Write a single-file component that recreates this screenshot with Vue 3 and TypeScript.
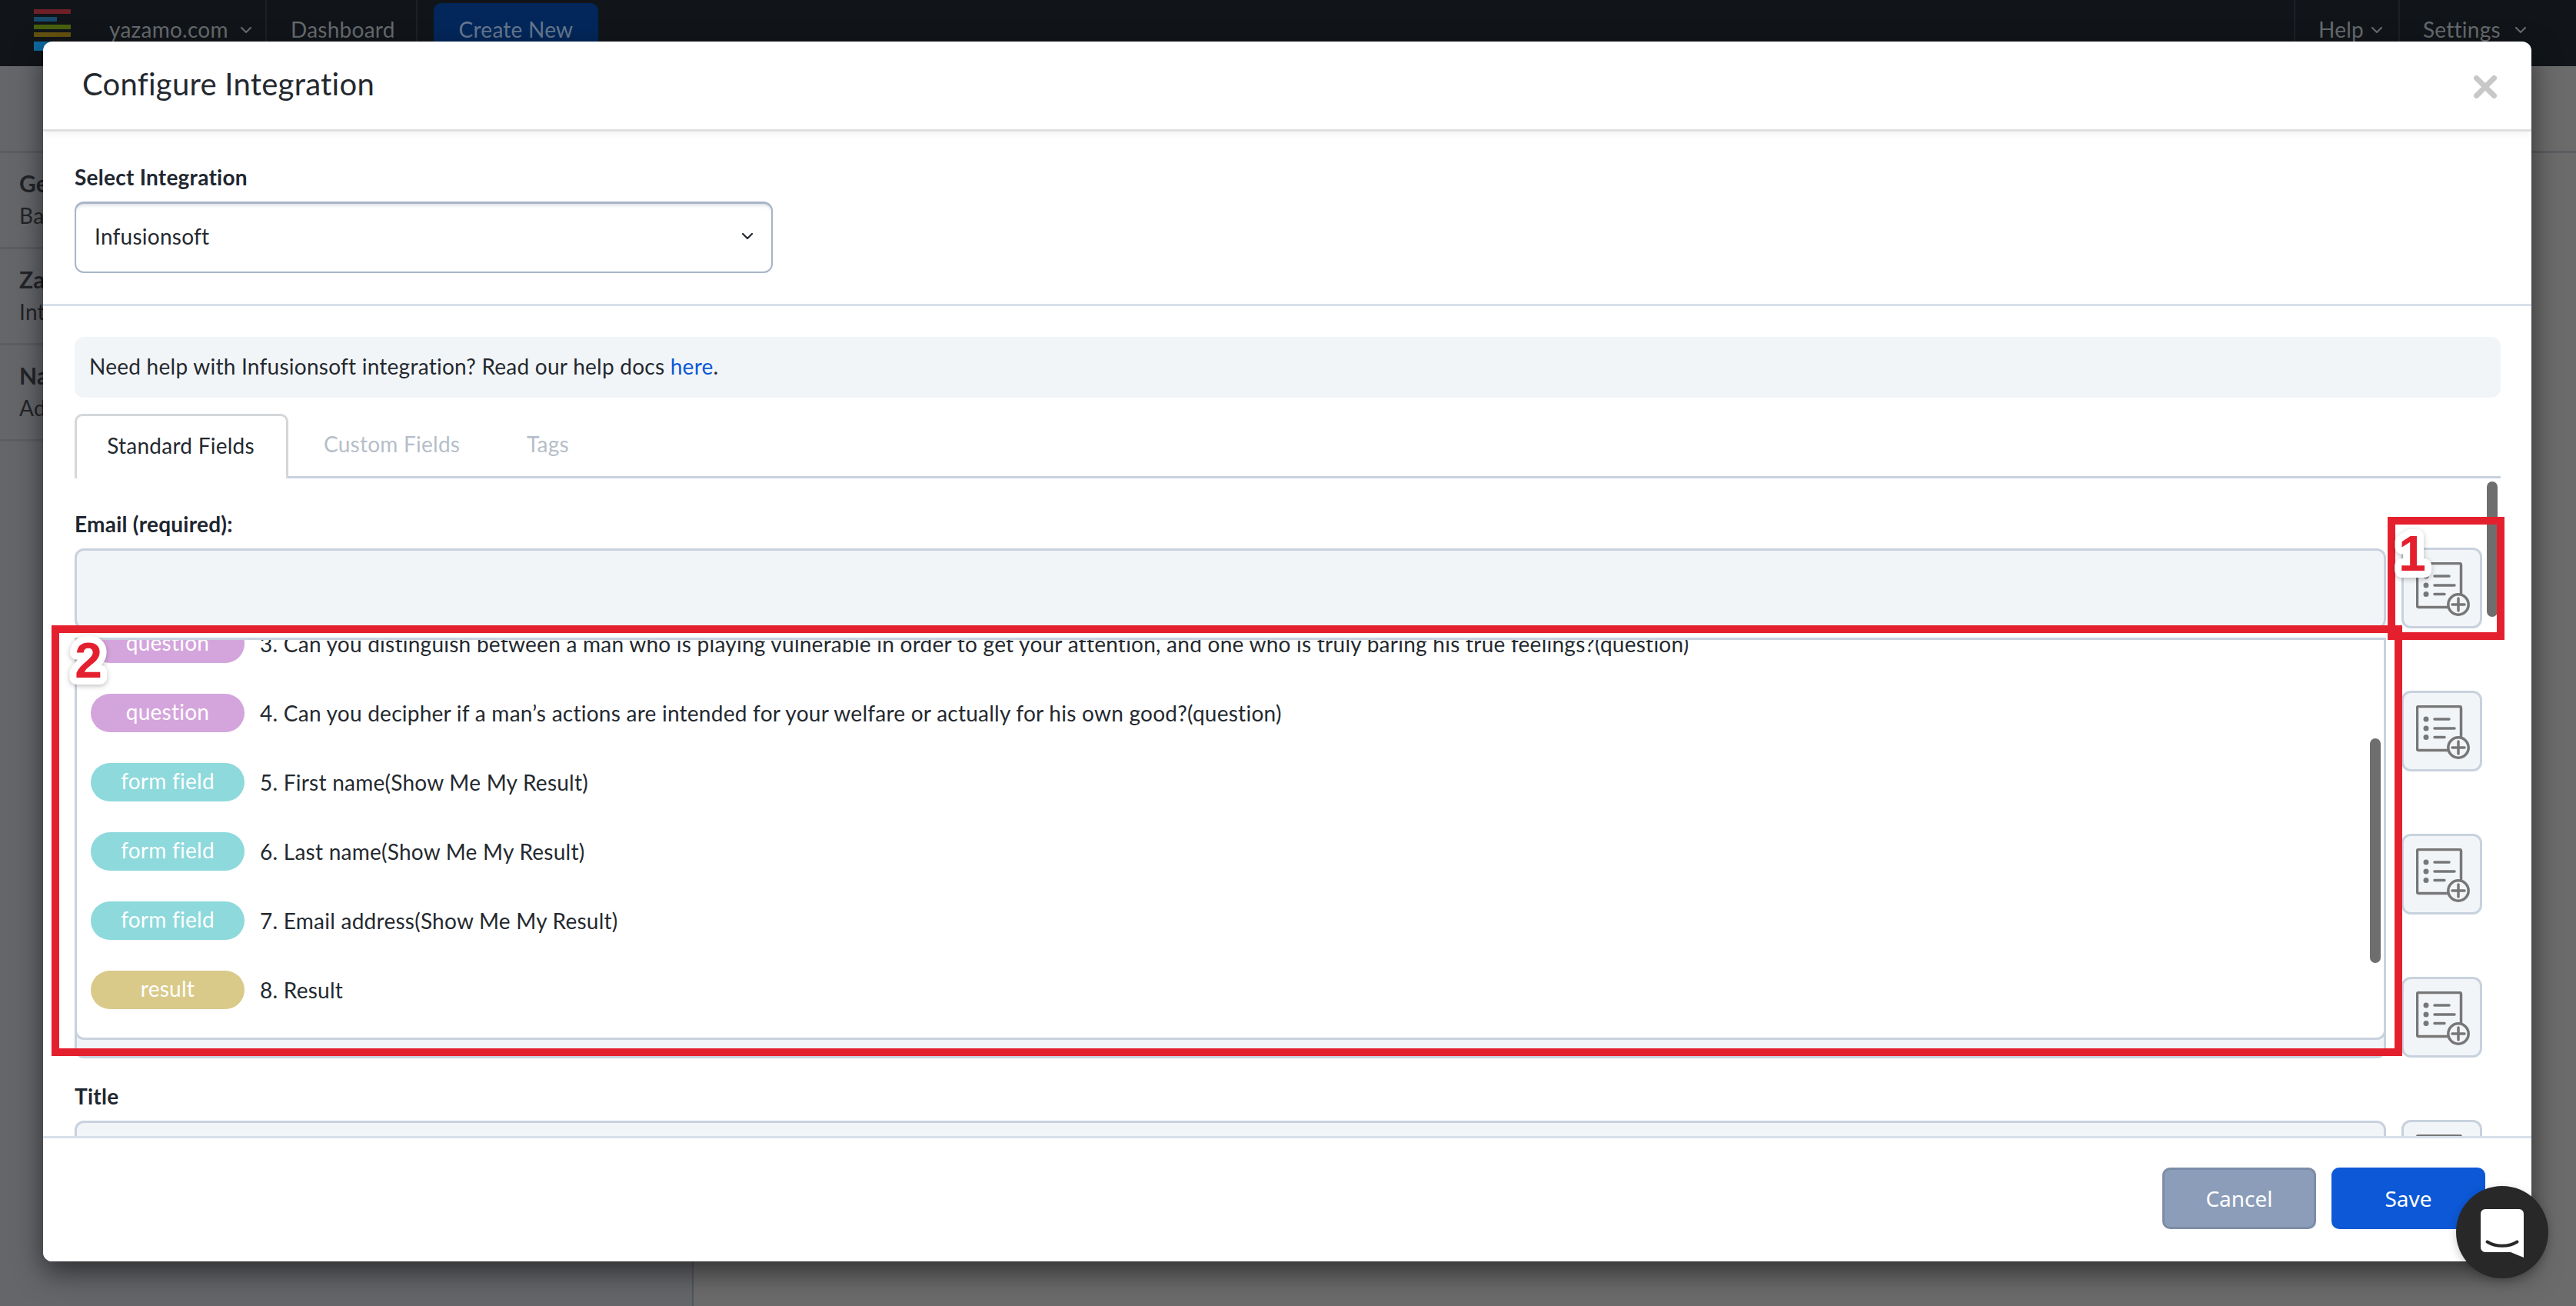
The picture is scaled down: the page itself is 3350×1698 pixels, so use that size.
<script setup lang="ts">
interface Row { pill: string; kind: string; text: string }
const rows: Row[] = [
  { pill: 'question', kind: 'q', text: '3. Can you distinguish between a man who is playing vulnerable in order to get your attention, and one who is truly baring his true feelings?(question)' },
  { pill: 'question', kind: 'q', text: '4. Can you decipher if a man’s actions are intended for your welfare or actually for his own good?(question)' },
  { pill: 'form field', kind: 'f', text: '5. First name(Show Me My Result)' },
  { pill: 'form field', kind: 'f', text: '6. Last name(Show Me My Result)' },
  { pill: 'form field', kind: 'f', text: '7. Email address(Show Me My Result)' },
  { pill: 'result', kind: 'r', text: '8. Result' },
]
const fields: string[] = ['Email (required):', '', '', '', 'Title']
const side = [['Ge', 'Ba'], ['Za', 'Int'], ['Na', 'Ad']]
</script>

<template>
  <div class="page">
    <header class="topbar">
      <svg class="logo" width="48" height="54" viewBox="0 0 48 54">
        <rect x="0" y="0" width="48" height="6" fill="#6f2026" />
        <rect x="0" y="10" width="30" height="6" fill="#164a6a" />
        <rect x="0" y="20" width="48" height="6" fill="#47600e" />
        <rect x="0" y="30" width="48" height="6" fill="#64520f" />
        <rect x="0" y="42" width="30" height="12" fill="#0f6aa0" />
      </svg>
      <div class="nav nav-site">yazamo.com<svg class="chev" viewBox="0 0 14 8"><path d="M1 1l6 6 6-6" /></svg></div>
      <div class="nav nav-dash">Dashboard</div>
      <div class="create">Create New</div>
      <div class="spacer"></div>
      <div class="nav nav-help">Help<svg class="chev" viewBox="0 0 14 8"><path d="M1 1l6 6 6-6" /></svg></div>
      <div class="nav nav-set">Settings<svg class="chev" viewBox="0 0 14 8"><path d="M1 1l6 6 6-6" /></svg></div>
    </header>

    <div class="under">
      <aside class="side">
        <div v-for="s in side" :key="s[0]" class="side-row">
          <div class="side-t">{{ s[0] }}</div>
          <div class="side-s">{{ s[1] }}</div>
        </div>
      </aside>
      <div class="rest"></div>
    </div>

    <section class="modal">
      <div class="m-head">
        <h2>Configure Integration</h2>
        <svg class="close" width="30" height="30" viewBox="0 0 30 30"><path d="M3.5 3.5l23 23M26.5 3.5l-23 23" /></svg>
      </div>

      <div class="m-select">
        <label class="lab">Select Integration</label>
        <div class="select">
          <span class="sel-val">Infusionsoft</span>
          <svg class="chev sel-chev" viewBox="0 0 14 8"><path d="M1 1l6 6 6-6" /></svg>
        </div>
      </div>

      <div class="m-body">
        <div class="help">Need help with Infusionsoft integration? Read our help docs <a>here</a>.</div>
        <div class="tabs">
          <div class="tab active">Standard Fields</div>
          <div class="tab t2">Custom Fields</div>
          <div class="tab t3">Tags</div>
        </div>

        <div class="form">
          <div v-for="(f, i) in fields" :key="i" class="field">
            <label class="lab flab">{{ f }}</label>
            <div class="field-row">
              <div class="inp"></div>
              <button class="add">
                <svg width="70" height="70" viewBox="0 0 70 70">
                  <rect x="1.5" y="1.5" width="57" height="57" rx="2" fill="none" />
                  <circle class="dot" cx="13" cy="18" r="3.5" />
                  <circle class="dot" cx="13" cy="30" r="3.5" />
                  <circle class="dot" cx="13" cy="41.5" r="3.5" />
                  <path d="M24 18h19M24 30h26M24 41.500h13" />
                  <circle cx="55" cy="55" r="13.200" class="plus-c" />
                  <path d="M55 47v16M47 55h16" />
                </svg>
              </button>
            </div>
          </div>

          <div class="drop">
            <div class="drop-list">
              <div v-for="r in rows" :key="r.text" class="drow">
                <span class="pill" :class="r.kind">{{ r.pill }}</span>
                <span class="dtext">{{ r.text }}</span>
              </div>
            </div>
            <div class="drop-bar"></div>
          </div>
          <div class="form-bar"></div>
        </div>
      </div>

      <div class="m-foot">
        <button class="btn cancel">Cancel</button>
        <button class="btn save">Save</button>
      </div>
    </section>

    <div class="box box1"></div>
    <div class="box box2"></div>

    <svg class="num num1" width="60" height="84" viewBox="0 0 60 84">
      <text x="30" y="62" text-anchor="middle">1</text>
    </svg>
    <svg class="num num2" width="70" height="84" viewBox="0 0 70 84">
      <text x="35" y="64" text-anchor="middle">2</text>
    </svg>

    <div class="chat">
      <svg width="56" height="63" viewBox="0 0 56 63">
        <path d="M6 0h44a6 6 0 0 1 6 6v57l-17-7H6a6 6 0 0 1-6-6V6a6 6 0 0 1 6-6z" fill="#fff" />
        <path d="M8.500 42.500c11 7 28 7 39 0" fill="none" stroke="#282828" stroke-width="4" stroke-linecap="round" />
      </svg>
    </div>
  </div>
</template>

<style scoped>
.page {
  position: relative;
  width: 3350px;
  height: 1698px;
  overflow: hidden;
  background: #6b6c6e;
  font-family: Lato, "Open Sans", sans-serif;
  font-size: 28px;
  letter-spacing: 0.25px;
  color: #24292f;
}
.topbar {
  height: 86px;
  background: #111519;
  display: flex;
  align-items: flex-start;
  color: #666a6e;
  padding-left: 44px;
  box-sizing: border-box;
}
.logo { margin-top: 12px; margin-right: 50px; flex: none; }
.nav { height: 86px; box-sizing: border-box; line-height: 76px; display: flex; align-items: flex-start; white-space: nowrap; border-right: 2px solid #1c2126; }
.nav-site { width: 205px; }
.nav-dash { width: 196px; padding-left: 31px; box-sizing: border-box; }
.nav-help { width: 138px; padding-left: 30px; border-left: 2px solid #1c2126; box-sizing: border-box; position: relative; }
.nav-set { width: 229px; padding-left: 30px; border-right: 0; box-sizing: border-box; position: relative; }
.chev { width: 14px; height: 8px; fill: none; stroke: #666a6e; stroke-width: 2.2px; stroke-linecap: round; stroke-linejoin: round; }
.nav .chev { margin-left: 16px; margin-top: 35px; }
.nav-help .chev { margin-left: 10px; }
.nav-set .chev { margin-left: 19px; }
.create { margin: 4px 0 0 21px; height: 82px; width: 214px; box-sizing: border-box; background: #03275a; color: #66788f; border-radius: 10px 10px 0 0; text-align: center; line-height: 68px; }
.spacer { flex: 1; }
.under { display: flex; height: 1612px; }
.side { width: 902px; flex: none; border-right: 2px solid #54565c; padding-top: 110px; box-sizing: border-box; background: #65666a; }
.rest { flex: 1; padding-top: 110px; background: #6b6b6b; }
.rest::before { content: ""; display: block; border-top: 3px solid #5c5d62; }
.side-row { height: 125px; box-sizing: border-box; border-top: 3px solid #5c5d62; padding: 19px 0 0 25px; color: #222428; }
.side-row:last-child { height: 128px; border-bottom: 3px solid #5c5d62; }
.side-t { font-weight: 700; line-height: 40px; font-size: 30px; }
.side-s { line-height: 44px; }

.modal {
  position: absolute;
  left: 56px;
  top: 54px;
  width: 3236px;
  height: 1586px;
  background: #fff;
  border-radius: 12px;
  box-shadow: 0 14px 36px rgba(0, 0, 0, 0.55);
  display: flex;
  flex-direction: column;
  overflow: hidden;
}
.m-head {
  height: 117px;
  flex: none;
  box-sizing: border-box;
  border-bottom: 3px solid #dfdfdf;
  box-shadow: 0 3px 10px rgba(0, 0, 0, 0.05);
  display: flex;
  align-items: center;
  justify-content: space-between;
  padding: 0 45px 4px 51px;
}
h2 { margin: 0; font-weight: 400; font-size: 40px; color: #24292f; }
.close { margin-top: 8px; }
.close path { stroke: #c8c8c8; stroke-width: 7px; stroke-linecap: round; fill: none; }

.m-select { height: 227px; flex: none; box-sizing: border-box; border-bottom: 3px solid #d6e0ea; padding: 39px 41px 0; }
.lab { display: block; height: 40px; line-height: 40px; font-weight: 700; color: #1f2730; }
.select {
  margin-top: 12px;
  width: 908px;
  height: 93px;
  box-sizing: border-box;
  border: 2px solid #a8b5c7;
  border-top-width: 3px;
  border-radius: 12px;
  box-shadow: inset 0 4px 4px -2px rgba(100, 120, 150, 0.25);
  display: flex;
  align-items: center;
  justify-content: space-between;
  padding: 0 24px;
}
.sel-val { margin-top: -4px; }
.sel-chev { stroke: #24292f; margin-top: -4px; }

.m-body { flex: 1; min-height: 0; overflow: hidden; padding: 40px 40px 0 41px; box-sizing: border-box; }
.help { height: 79px; background: #f2f5f8; border-radius: 12px; box-sizing: border-box; padding-left: 19px; line-height: 76px; }
.help a { color: #0c58d6; }
.tabs { margin-top: 21px; height: 84px; display: flex; border-bottom: 3px solid #c8d2de; box-sizing: border-box; }
.tab { height: 84px; box-sizing: border-box; line-height: 78px; color: #b5bec9; }
.active { width: 278px; padding-right: 2px; line-height: 76px; text-align: center; border: 3px solid #d4d7da; border-bottom: 0; border-radius: 10px 10px 0 0; background: #fff; color: #24292f; }
.t2 { margin-left: 46px; width: 264px; }
.t3 { width: 80px; }

.form { position: relative; margin-top: 39px; }
.field { height: 186px; }
.flab { margin-bottom: 12px; }
.field-row { display: flex; gap: 20px; padding-right: 24px; }
.inp { flex: 1; height: 105px; box-sizing: border-box; background: #f2f5f8; border: 3px solid #c8d2de; border-radius: 12px; }
.add { width: 105px; height: 105px; margin-top: -1px; flex: none; box-sizing: border-box; background: #f2f5f8; border: 3px solid #c8d2de; border-radius: 12px; padding: 2px 0 0 3px; display: flex; align-items: center; justify-content: center; }
.add svg { flex: none; }
.add rect, .add path, .plus-c { stroke: #777; stroke-width: 3.5px; stroke-linecap: round; fill: none; }
.plus-c { fill: #f2f5f8; }
.dot { fill: #777; }

.drop { position: absolute; left: 0; top: 168px; width: 3006px; height: 523px; box-sizing: border-box; background: #fff; border: 3px solid #c8d2de; border-radius: 0 0 12px 12px; overflow: hidden; }
.drop-list { margin-top: -40px; }
.drow { height: 90px; display: flex; align-items: center; padding-left: 18px; white-space: nowrap; }
.pill { width: 200px; height: 50px; flex: none; border-radius: 25px; color: #fff; text-align: center; line-height: 46px; margin-right: 20px; }
.q { background: #d4a5dc; }
.f { background: #8dd9dc; }
.r { background: #d9ca8a; }
.drop-bar { position: absolute; left: 2982px; top: 128px; width: 14px; height: 292px; border-radius: 7px; background: #6e6e6e; }
.form-bar { position: absolute; left: 3137px; top: -35px; width: 14px; height: 176px; border-radius: 7px; background: #6e6e6e; }

.m-foot { height: 163px; flex: none; box-sizing: border-box; border-top: 3px solid #d6e0ea; display: flex; justify-content: flex-end; gap: 20px; padding: 38px 60px 0 0; background: #fff; position: relative; }
.btn { width: 200px; height: 80px; box-sizing: border-box; border-radius: 10px; color: #fff; font-family: "Noto Sans", sans-serif; font-size: 28px; letter-spacing: 0; }
.cancel { background: #8c9db9; border: 3px solid #7b8ca8; }
.save { background: #0c58d6; border: 0; }

.box { position: absolute; box-sizing: border-box; border: 10px solid #e5202e; }
.box1 { left: 3105px; top: 672px; width: 152px; height: 160px; }
.box2 { left: 67px; top: 813px; width: 3057px; height: 560px; }
.num { position: absolute; overflow: visible; filter: drop-shadow(0 2px 3px rgba(0, 0, 0, 0.25)); }
.num text { font-family: "Liberation Sans", Arial, sans-serif; font-weight: 700; font-size: 64px; letter-spacing: 0; fill: #e5202e; stroke: #fff; stroke-width: 18px; stroke-linejoin: round; paint-order: stroke; }
.num1 { left: 3107px; top: 680px; }
.num2 { left: 80px; top: 817px; }

.chat { position: absolute; left: 3194px; top: 1542px; width: 120px; height: 120px; border-radius: 50%; background: #282828; display: flex; align-items: center; justify-content: center; box-shadow: 0 4px 12px rgba(0, 0, 0, 0.2); }
.chat svg { margin-top: 3px; }
</style>

<style>
html, body { margin: 0; padding: 0; }
</style>
